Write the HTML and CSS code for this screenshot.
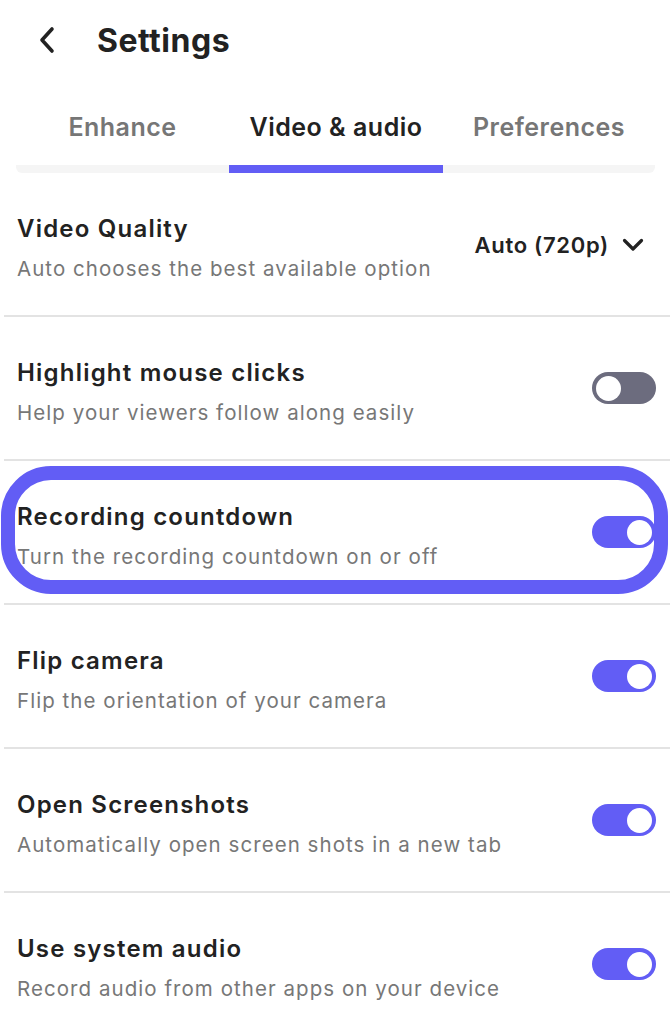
FILE: index.html
```html
<!DOCTYPE html>
<html lang="en">
<head>
<meta charset="utf-8">
<link rel="stylesheet" href="styles.css">
</head>
<body>
<div class="page">
  <header class="header">
    <button class="back" aria-label="Back">
      <svg width="18" height="28" viewBox="0 0 18 28"><path d="M14 3 L4 14 L14 25" fill="none" stroke="#222" stroke-width="3.6" stroke-linecap="round" stroke-linejoin="round"/></svg>
    </button>
    <h1 class="title">Settings</h1>
  </header>

  <nav class="tabs">
    <div class="tab first">Enhance</div>
    <div class="tab active">Video &amp; audio</div>
    <div class="tab last">Preferences</div>
  </nav>

  <ul class="list">
    <li class="row">
      <div class="text">
        <div class="row-title">Video Quality</div>
        <div class="row-sub">Auto chooses the best available option</div>
      </div>
      <div class="dropdown">
        <span>Auto (720p)</span>
        <svg width="22" height="14" viewBox="0 0 22 14"><path d="M2.5 2.5 L11 11 L19.5 2.5" fill="none" stroke="#222" stroke-width="3.2" stroke-linecap="round" stroke-linejoin="round"/></svg>
      </div>
    </li>
    <li class="row">
      <div class="text">
        <div class="row-title">Highlight mouse clicks</div>
        <div class="row-sub">Help your viewers follow along easily</div>
      </div>
      <span class="toggle"><span class="knob"></span></span>
    </li>
    <li class="row">
      <div class="text">
        <div class="row-title">Recording countdown</div>
        <div class="row-sub">Turn the recording countdown on or off</div>
      </div>
      <span class="toggle on"><span class="knob"></span></span>
      <span class="ring"></span>
    </li>
    <li class="row">
      <div class="text">
        <div class="row-title">Flip camera</div>
        <div class="row-sub">Flip the orientation of your camera</div>
      </div>
      <span class="toggle on"><span class="knob"></span></span>
    </li>
    <li class="row">
      <div class="text">
        <div class="row-title">Open Screenshots</div>
        <div class="row-sub">Automatically open screen shots in a new tab</div>
      </div>
      <span class="toggle on"><span class="knob"></span></span>
    </li>
    <li class="row">
      <div class="text">
        <div class="row-title">Use system audio</div>
        <div class="row-sub">Record audio from other apps on your device</div>
      </div>
      <span class="toggle on"><span class="knob"></span></span>
    </li>
  </ul>
</div>
</body>
</html>
```

FILE: styles.css
```css
* { box-sizing: border-box; }
html, body { margin: 0; padding: 0; background: #fff; }
body {
  font-family: Inter, "Noto Sans", sans-serif;
  color: #222;
  overflow: hidden;
}
.page { width: 670px; }

.header {
  display: flex;
  align-items: center;
  height: 80px;
  padding-left: 38px;
}
.back {
  border: 0;
  background: none;
  padding: 0;
  width: 20px;
  height: 30px;
  display: flex;
  align-items: center;
  margin-right: 39px;
}
.title {
  margin: 0;
  font-size: 32px;
  font-weight: 700;
  letter-spacing: 0.5px;
}

.tabs {
  display: grid;
  grid-template-columns: 213px 214px 212px;
  margin: 0 15px 0 16px;
}
.tab {
  text-align: center;
  font-size: 25px;
  font-weight: 600;
  letter-spacing: 0.5px;
  color: #767676;
  padding-top: 32px;
  height: 93px;
  border-bottom: 8px solid #f5f5f5;
}
.tab.first { border-bottom-left-radius: 6px; }
.tab.last { border-bottom-right-radius: 6px; }
.tab.active { color: #222; border-bottom-color: #625df5; }

.list {
  list-style: none;
  margin: 0 0 0 4px;
  padding: 0;
}
.row {
  position: relative;
  display: flex;
  align-items: center;
  justify-content: space-between;
  height: 144px;
  padding: 9px 14px 0 13px;
  border-bottom: 2px solid #e3e3e3;
}
.text { display: flex; flex-direction: column; gap: 4px; }
.row-title {
  font-size: 24px;
  font-weight: 600;
  letter-spacing: 1.2px;
  line-height: 36px;
  color: #222;
}
.row-sub {
  font-size: 20.5px;
  letter-spacing: 1.05px;
  line-height: 36px;
  color: #777;
}
.dropdown {
  display: flex;
  align-items: center;
  gap: 13px;
  margin-right: 12px;
  margin-top: -7px;
  font-size: 22px;
  font-weight: 600;
  letter-spacing: 0.7px;
  color: #222;
}
.toggle {
  width: 64px;
  height: 32px;
  border-radius: 16px;
  background: #6c6c7e;
  display: flex;
  align-items: center;
  padding: 0 4px;
  margin-top: -9px;
}
.toggle .knob {
  width: 25px;
  height: 25px;
  border-radius: 50%;
  background: #fff;
}
.toggle.on { background: #625df5; justify-content: flex-end; }
.ring {
  position: absolute;
  top: 5px;
  bottom: 9px;
  left: -3px;
  right: 2px;
  border: 14px solid #625df5;
  border-radius: 50px;
  pointer-events: none;
}
```
